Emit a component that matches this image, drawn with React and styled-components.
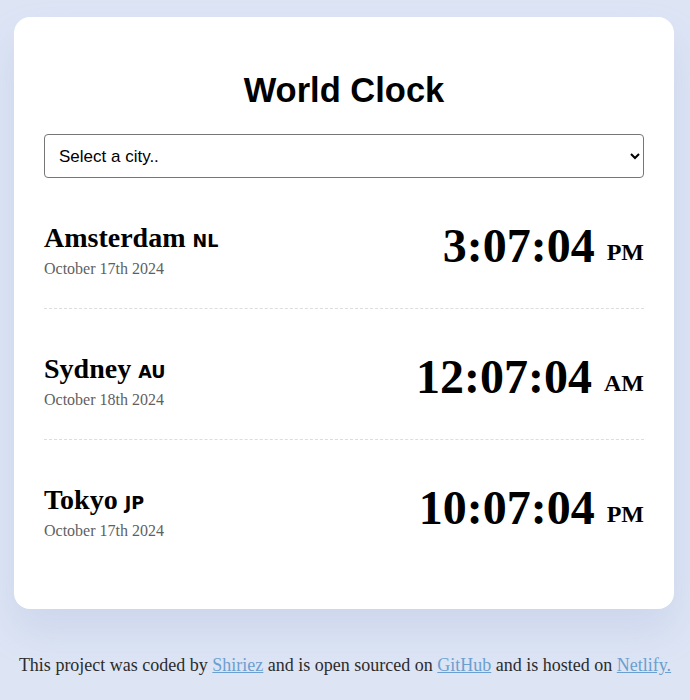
import React from "react";
import styled, { createGlobalStyle } from "styled-components";

const Global = createGlobalStyle`
  html, body {
    margin: 0;
    padding: 0;
    background: #dde5f5;
  }
  body {
    font-family: "Liberation Serif", "Times New Roman", serif;
  }
`;

const Page = styled.div`
  min-height: 700px;
  padding-top: 17px;
  box-sizing: border-box;
`;

const Card = styled.main`
  margin: 0 16px 0 14px;
  background: #ffffff;
  border-radius: 16px;
  padding: 40px 30px 39px;
  box-shadow: 0 22px 40px rgba(120, 135, 185, 0.16);
`;

const Title = styled.h1`
  margin: 14px 0 24px;
  font-family: "Liberation Sans", Arial, sans-serif;
  font-size: 34.5px;
  line-height: 39px;
  font-weight: 700;
  text-align: center;
  color: #000;
`;

const Select = styled.select`
  display: block;
  width: 100%;
  height: 44px;
  box-sizing: border-box;
  padding: 0 8px 0 10px;
  font-family: "Liberation Sans", Arial, sans-serif;
  font-size: 17px;
  color: #000;
  background: #fff;
  border: 1px solid #767676;
  border-radius: 4px;
`;

const Row = styled.div`
  display: flex;
  justify-content: space-between;
  align-items: flex-start;
  padding: 40px 0 30px;
  border-bottom: ${(p) => (p.$last ? "none" : "1px dashed #dddddd")};
`;

const Place = styled.div`
  padding-top: 4px;
`;

const City = styled.h2`
  margin: 0;
  height: 32px;
  font-family: "Liberation Serif", "Times New Roman", serif;
  font-size: 28px;
  line-height: 32px;
  font-weight: 700;
  color: #000;
`;

const Flag = styled.span`
  font-family: "DejaVu Sans", Verdana, sans-serif;
  font-size: 17.5px;
  line-height: 1;
  font-weight: 700;
`;

const DateText = styled.div`
  margin-top: 6px;
  height: 18px;
  font-size: 16px;
  line-height: 18px;
  color: #5f5f5f;
`;

const Time = styled.div`
  height: 56px;
  font-family: "Liberation Serif", "Times New Roman", serif;
  font-size: 48px;
  line-height: 56px;
  font-weight: 700;
  color: #000;
  white-space: nowrap;
`;

const Meridiem = styled.small`
  font-size: 24px;
  line-height: 1;
  vertical-align: 2px;
`;

const Footer = styled.footer`
  margin-top: 46px;
  text-align: center;
  font-size: 18px;
  line-height: 21px;
  color: #2b2b2b;
`;

const Link = styled.a`
  color: #6b9fcf;
  text-decoration: underline;
`;

const cities = [
  { name: "Amsterdam", code: "NL", date: "October 17th 2024", time: "3:07:04", ampm: "PM" },
  { name: "Sydney", code: "AU", date: "October 18th 2024", time: "12:07:04", ampm: "AM" },
  { name: "Tokyo", code: "JP", date: "October 17th 2024", time: "10:07:04", ampm: "PM" },
];

export default function App() {
  return (
    <>
      <Global />
      <Page>
        <Card>
          <Title>World Clock</Title>
          <Select defaultValue="">
            <option value="">Select a city..</option>
            <option value="paris">Paris</option>
            <option value="london">London</option>
            <option value="newyork">New York</option>
          </Select>
          {cities.map((c, i) => (
            <Row key={c.name} $last={i === cities.length - 1}>
              <Place>
                <City>
                  {c.name} <Flag>{c.code}</Flag>
                </City>
                <DateText>{c.date}</DateText>
              </Place>
              <Time>
                {c.time} <Meridiem>{c.ampm}</Meridiem>
              </Time>
            </Row>
          ))}
        </Card>
        <Footer>
          This project was coded by <Link href="#">Shiriez</Link> and is open sourced on{" "}
          <Link href="#">GitHub</Link> and is hosted on <Link href="#">Netlify.</Link>
        </Footer>
      </Page>
    </>
  );
}
